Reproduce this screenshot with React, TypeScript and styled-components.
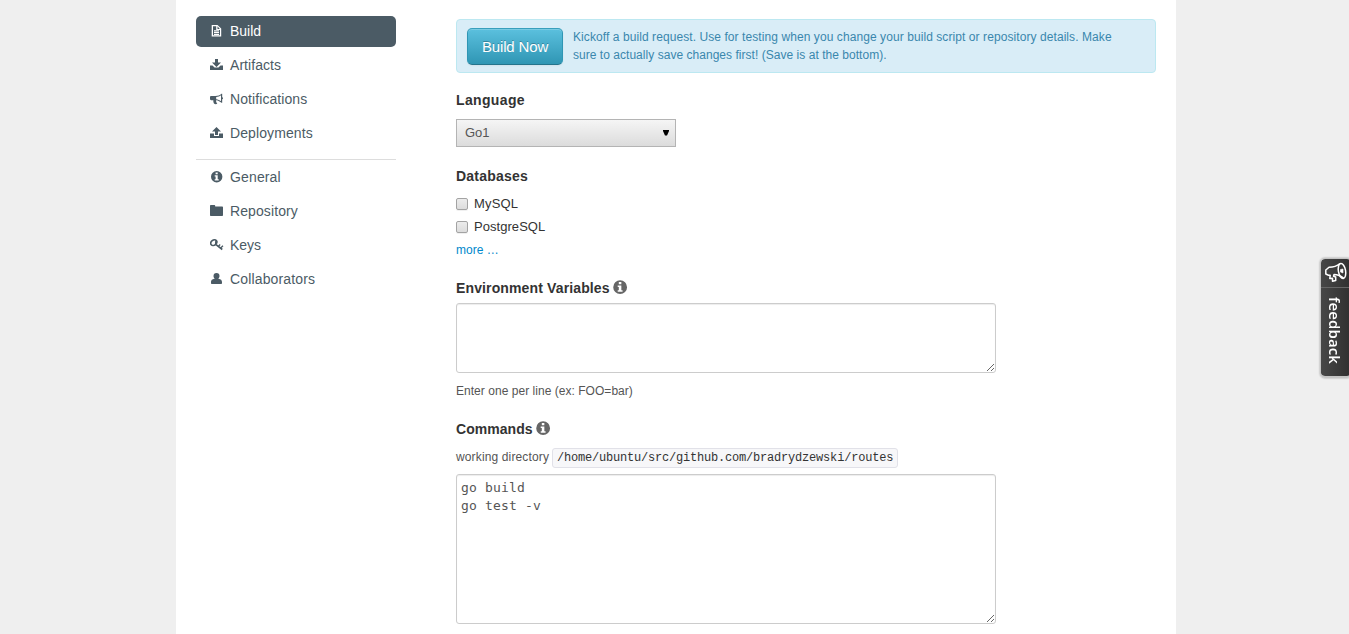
import React from "react";
import styled, { createGlobalStyle, css } from "styled-components";

const GlobalStyle = createGlobalStyle`
  html, body { margin: 0; height: 634px; overflow: hidden; }
  body {
    background: #efefef;
    color: #333;
    font-family: "Liberation Sans", Arial, sans-serif;
    font-size: 13px;
    line-height: 18px;
  }
  * { box-sizing: border-box; }
`;

const Page = styled.div`
  display: flex;
  width: 1000px;
  height: 634px;
  margin: 0 auto 0 176px;
  padding: 0 20px;
  background: #fff;
  overflow: hidden;
`;

const Sidebar = styled.nav`
  width: 200px;
  margin-right: 60px;
  padding-top: 16px;
`;

const NavGroup = styled.div`
  display: flex;
  flex-direction: column;
  gap: 3px;
  & + & {
    margin-top: 10px;
    padding-top: 2px;
    border-top: 1px solid #ddd;
  }
`;

const NavItem = styled.a<{ $active?: boolean; $spacing?: number }>`
  display: flex;
  align-items: center;
  height: 31px;
  padding: 0 14px;
  border-radius: 5px;
  font-size: 14px;
  line-height: 31px;
  letter-spacing: ${(p) => p.$spacing ?? 0}px;
  color: ${(p) => (p.$active ? "#fff" : "#4b5b65")};
  background: ${(p) => (p.$active ? "#4b5b65" : "transparent")};
  svg { margin: 0 6px 1px 0; }
`;

const Content = styled.main`
  display: flex;
  flex-direction: column;
  align-items: flex-start;
  width: 700px;
  padding-top: 19px;
`;

const Alert = styled.div`
  display: flex;
  width: 700px;
  height: 54px;
  padding: 8px 10px;
  border: 1px solid #bce8f1;
  border-radius: 4px;
  background: #d9edf7;
  color: #3a87ad;
`;

const BuildButton = styled.button`
  flex: none;
  width: 96px;
  height: 37px;
  padding: 0 0 1px;
  border: 1px solid #2f96b4;
  border-color: #3a9fbc #2f96b4 #24748c;
  border-radius: 5px;
  background: linear-gradient(#5bc0de, #2f96b4);
  box-shadow: inset 0 1px 0 rgba(255, 255, 255, 0.2), 0 1px 2px rgba(0, 0, 0, 0.05);
  color: #fff;
  font: 15px "Liberation Sans", Arial, sans-serif;
  letter-spacing: -0.15px;
  text-shadow: 0 -1px 0 rgba(0, 0, 0, 0.25);
`;

const AlertText = styled.p`
  margin: 0 0 0 10px;
  font-size: 12px;
  line-height: 18px;
  white-space: nowrap;
`;

const Line = styled.span<{ $spacing: number }>`
  display: block;
  letter-spacing: ${(p) => p.$spacing}px;
`;

const Heading = styled.h4<{ $top: number; $spacing?: number }>`
  display: flex;
  align-items: center;
  height: 20px;
  margin: ${(p) => p.$top}px 0 0;
  font-size: 14px;
  line-height: 20px;
  letter-spacing: ${(p) => p.$spacing ?? 0.35}px;
  svg { margin: -2px 0 0 2.7px; color: #666; }
`;

const Select = styled.div`
  display: flex;
  align-items: center;
  justify-content: space-between;
  width: 220px;
  height: 28px;
  margin-top: 9px;
  padding: 0 6px 0 8px;
  border: 1px solid #b4b4b4;
  background: linear-gradient(#f5f5f5, #dcdcdc);
  color: #555;
`;

const CheckRow = styled.label<{ $spacing?: number }>`
  display: flex;
  align-items: center;
  height: 18px;
  margin-bottom: 5px;
  letter-spacing: ${(p) => p.$spacing ?? 0}px;
`;

const Checks = styled.div`
  margin-top: 9px;
`;

const CheckBox = styled.span`
  width: 12px;
  height: 12px;
  margin: 0 6px 0 0;
  border: 1px solid #a3a3a3;
  border-radius: 2px;
  background: linear-gradient(#ececec, #dcdcdc);
  box-shadow: 0 1px 0 rgba(0, 0, 0, 0.06);
`;

const MoreLink = styled.a`
  font-size: 12px;
  line-height: 18px;
  color: #0088cc;
`;

const Hint = styled.div<{ $top: number; $spacing?: number }>`
  display: flex;
  align-items: center;
  height: 20px;
  margin-top: ${(p) => p.$top}px;
  font-size: 12px;
  line-height: 18px;
  letter-spacing: ${(p) => p.$spacing ?? 0}px;
  color: #555;
`;

const HintText = styled.span`
  padding-bottom: 2px;
`;

const Code = styled.code`
  height: 20px;
  margin-left: 3px;
  padding: 0 4px;
  border: 1px solid #e1e1e8;
  border-radius: 3px;
  background: #f7f7f9;
  color: #333;
  font: 12px/18px "Liberation Mono", monospace;
  letter-spacing: -0.2px;
`;

const mono = css`
  font-family: "DejaVu Sans Mono", monospace;
  font-size: 13px;
  line-height: 18px;
  letter-spacing: 0.17px;
`;

const TextArea = styled.textarea<{ $height: number; $top: number }>`
  display: block;
  flex: none;
  width: 540px;
  height: ${(p) => p.$height}px;
  margin: ${(p) => p.$top}px 0 0;
  padding: 4px;
  border: 1px solid #ccc;
  border-radius: 3px;
  box-shadow: inset 0 1px 1px rgba(0, 0, 0, 0.075);
  background: #fff;
  color: #555;
  outline: none;
  ${mono}
`;

const Feedback = styled.aside`
  position: fixed;
  top: 258px;
  right: -3px;
  display: flex;
  flex-direction: column;
  width: 32px;
  height: 120px;
  border: 1px solid #c4c4c4;
  border-width: 1px 1px 2px 1px;
  border-radius: 5px;
  background: linear-gradient(90deg, #474747, #303030) padding-box;
  box-shadow: 0 0 2px #888;
  color: #fff;
`;

const FeedbackIcon = styled.div`
  height: 29px;
  padding: 2px 0 0 3px;
  border-bottom: 1px solid #666;
`;

const FeedbackLabel = styled.div`
  width: 28px;
  padding-top: 9px;
  writing-mode: vertical-rl;
  font: 600 15px/28px "Open Sans", sans-serif;
  letter-spacing: 0.1px;
`;

type GlyphName = "file" | "download" | "bullhorn" | "upload" | "info" | "folder" | "key" | "user";

const glyphs: Record<GlyphName, React.ReactNode> = {
  file: (
    <path fillRule="evenodd" d="M1.700 1h5.800L11.200 4.500v8H1.700zM3 2.200v9.100h7V6H6.200V2.200zM7.500 2.200V5h2.300zM4 6.200h5v1.200H4zM4 8.100h5v1.200H4zM4 10h5v1H4z" />
  ),
  download: (
    <>
      <path d="M5 1h3v3.500h3L6.500 9 2 4.500h3z" />
      <path d="M0 7.500h2.500l2 2h4l2-2H13V12H0z" />
    </>
  ),
  bullhorn: (
    <path fillRule="evenodd" d="M1.200 4H5.500c2.500 0 4.500-1 6-2.300h.7v3.500c1.100.2 1.100 1.800 0 2v3.600h-.7C10 9.400 8.300 8.500 6.300 8.200c-.6.600-.3 1.200.2 1.700-.2.700.2 1.200.9 1.700-.7.800-2.700.8-3.400 0-.5-1.500-.9-2.300-.6-3.400H1.200C.5 8.200 0 7.700 0 7V5.200C0 4.500.5 4 1.200 4zM6.200 5v2.300c1.700.2 3.500.9 4.800 1.900V3.200C9.700 4.200 7.900 4.900 6.200 5z" />
  ),
  upload: (
    <>
      <path d="M6.500 1L11 5.500H8V9H5V5.500H2z" />
      <path d="M0 7.500h4V10h5V7.500h4v4.500H0z" />
    </>
  ),
  info: (
    <path fillRule="evenodd" d="M6.700 1a5.700 5.700 0 1 1 0 11.400A5.700 5.700 0 0 1 6.700 1zM5.600 2.500v1.800h2.100V2.500zM4.700 5.300v1.200h.9v2.800h-.9v1.200h4V9.300h-1V5.300z" />
  ),
  folder: <path d="M0 2c0-.6.400-1 1-1h3.200c.6 0 1 .4 1 1v.5H12c.6 0 1 .4 1 1V11c0 .6-.4 1-1 1H1c-.6 0-1-.4-1-1z" />,
  key: (
    <g fill="none" stroke="currentColor">
      <ellipse cx="3.800" cy="4.600" rx="3.300" ry="2.500" transform="rotate(-40 3.800 4.600)" strokeWidth="1.600" />
      <path d="M6 2.500L5.700 6.500L12.300 11.500" strokeWidth="1.600" />
      <path d="M13 7.800L10.400 10.200M10.200 6.500L8.300 8.400" strokeWidth="1.300" />
    </g>
  ),
  user: <path d="M6.500 1c2 0 3 1.200 3 2.900 0 1.200-.5 2.200-1.200 2.800C9.500 7.200 12 7 12 10.200v.8c0 .7-.4 1-1 1H2c-.6 0-1-.3-1-1v-.8C1 7 3.500 7.200 4.700 6.700 4 6.100 3.500 5.100 3.500 3.900 3.500 2.200 4.500 1 6.500 1z" />,
};

const Glyph = ({ name, size = 14 }: { name: GlyphName; size?: number }) => (
  <svg width={size} height={size} viewBox="0 0 14 14" fill="currentColor">
    {glyphs[name]}
  </svg>
);

const navGroups: { label: string; icon: GlyphName; active?: boolean; spacing?: number }[][] = [
  [
    { label: "Build", icon: "file", active: true },
    { label: "Artifacts", icon: "download", spacing: 0.06 },
    { label: "Notifications", icon: "bullhorn", spacing: 0.08 },
    { label: "Deployments", icon: "upload", spacing: 0.1 },
  ],
  [
    { label: "General", icon: "info", spacing: 0.14 },
    { label: "Repository", icon: "folder", spacing: 0.1 },
    { label: "Keys", icon: "key" },
    { label: "Collaborators", icon: "user", spacing: 0.15 },
  ],
];

export default function App() {
  return (
    <>
      <GlobalStyle />
      <Page>
        <Sidebar>
          {navGroups.map((group, i) => (
            <NavGroup key={i}>
              {group.map((item) => (
                <NavItem key={item.label} $active={item.active} $spacing={item.spacing}>
                  <Glyph name={item.icon} />
                  {item.label}
                </NavItem>
              ))}
            </NavGroup>
          ))}
        </Sidebar>
        <Content>
          <Alert>
            <BuildButton>Build Now</BuildButton>
            <AlertText>
              <Line $spacing={0.078}>
                Kickoff a build request. Use for testing when you change your build script or repository details. Make
              </Line>
              <Line $spacing={0.035}>sure to actually save changes first! (Save is at the bottom).</Line>
            </AlertText>
          </Alert>

          <Heading $top={17}>Language</Heading>
          <Select>
            Go1
            <svg width="6" height="6" viewBox="0 0 6 6">
              <path d="M0 0h6v1L4 5.500H2L0 1z" fill="#000" />
            </svg>
          </Select>

          <Heading $top={19} $spacing={0.22}>Databases</Heading>
          <Checks>
            <CheckRow $spacing={0.15}><CheckBox />MySQL</CheckRow>
            <CheckRow $spacing={0.05}><CheckBox />PostgreSQL</CheckRow>
          </Checks>
          <MoreLink>more …</MoreLink>

          <Heading $top={19} $spacing={0.13}>
            Environment Variables
            <Glyph name="info" size={17} />
          </Heading>
          <TextArea $height={70} $top={5} spellCheck={false} />
          <Hint $top={8} $spacing={0.035}>Enter one per line (ex: FOO=bar)</Hint>

          <Heading $top={18} $spacing={0.05}>
            Commands
            <Glyph name="info" size={17} />
          </Heading>
          <Hint $top={9} $spacing={0.14}>
            <HintText>working directory</HintText>
            <Code>/home/ubuntu/src/github.com/bradrydzewski/routes</Code>
          </Hint>
          <TextArea $height={150} $top={6} spellCheck={false} defaultValue={"go build\ngo test -v"} />
        </Content>
      </Page>
      <Feedback>
        <FeedbackIcon>
          <svg width="24" height="24" viewBox="0 0 24 24" fill="none" stroke="#fff" strokeWidth="1.500" strokeLinejoin="round">
            <path d="M16 2.500C13 5 10 6.200 5 6.200L1.800 9v4L4.500 14.200H6.200L5.800 17.500L8.500 17.300V20.200L11.700 19.500V16L9.500 15.300L10 13.500C13 13.500 17 15 20 17.500" />
            <ellipse cx="18" cy="10" rx="3.600" ry="7.600" transform="rotate(-10 18 10)" />
            <path d="M16.500 8.500L19 8V12L16.500 11z" fill="#fff" strokeWidth=".6" />
          </svg>
        </FeedbackIcon>
        <FeedbackLabel>feedback</FeedbackLabel>
      </Feedback>
    </>
  );
}
